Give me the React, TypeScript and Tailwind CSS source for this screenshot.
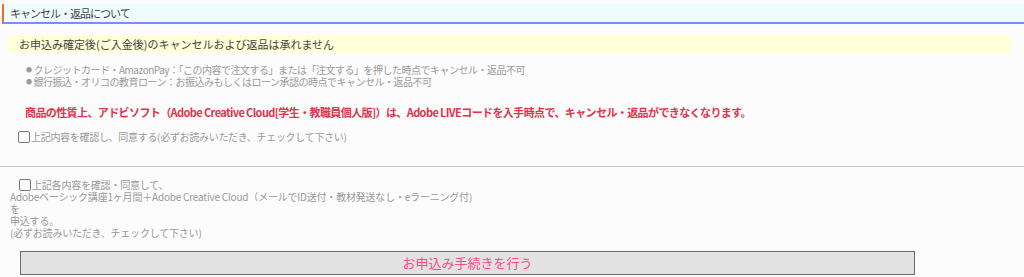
import React from "react";

const jp = { fontFamily: '"Noto Sans CJK JP", "Noto Sans", sans-serif' };

export default function App() {
  return (
    <div className="w-full h-[277px] overflow-hidden bg-[#fcfcfc] pt-[4px]" style={jp}>
      {/* section title */}
      <div className="ml-[2px] h-[20px] bg-[#effdff] border-l-[2px] border-l-[#f06a2a] border-b-[2px] border-b-[#7a8cff] pl-[6px] flex items-center text-[11px] tracking-[-1px] leading-none text-[#444]">
        キャンセル・返品について
      </div>

      <div className="mt-[11px] ml-[8px] mr-[13px] h-[18px] bg-[#ffffd8] pl-[11px] flex items-center text-[11px] leading-none text-[#444]">
        お申込み確定後(ご入金後)のキャンセルおよび返品は承れません
      </div>

      <ul className="mt-[11px] ml-[26px] text-[10px] leading-[12px] tracking-[-0.5px] text-[#9a9a9a]">
        <li className="flex items-center gap-[2px]">
          <span className="text-[6px]">●</span>
          クレジットカード・AmazonPay：「この内容で注文する」または「注文する」を押した時点でキャンセル・返品不可
        </li>
        <li className="flex items-center gap-[2px]">
          <span className="text-[6px]">●</span>
          銀行振込・オリコの教育ローン：お振込みもしくはローン承認の時点でキャンセル・返品不可
        </li>
      </ul>

      <p className="mt-[17px] ml-[25px] text-[11px] leading-[14px] tracking-[-0.6px] font-bold text-[#e0344c]">
        商品の性質上、アドビソフト（Adobe Creative Cloud[学生・教職員個人版]）は、Adobe LIVEコードを入手時点で、キャンセル・返品ができなくなります。
      </p>

      <label className="mt-[11px] ml-[18px] flex items-center text-[10px] leading-[14px] tracking-[-0.3px] text-[#999]">
        <span className="w-[12px] h-[12px] border border-[#777] rounded-[2px] bg-white mr-[1px]" />
        上記内容を確認し、同意する(必ずお読みいただき、チェックして下さい)
      </label>

      <hr className="mt-[22px] border-0 border-t border-t-[#c8c8c8]" />

      <div className="mt-[12px] pl-[10px] text-[10px] leading-[12px] tracking-[-0.2px] text-[#999]">
        <div className="flex items-center ml-[9px]">
          <span className="w-[12px] h-[12px] border border-[#777] rounded-[2px] bg-white mr-[1px]" />
          上記各内容を確認・同意して、
        </div>
        <div>Adobeベーシック講座1ヶ月間＋Adobe Creative Cloud（メールでID送付・教材発送なし・eラーニング付)</div>
        <div>を</div>
        <div>申込する。</div>
        <div>(必ずお読みいただき、チェックして下さい)</div>
      </div>

      <button className="mt-[12px] ml-[20px] w-[895px] h-[24px] bg-[#e2e2e2] border border-[#6a6a6a] text-[13px] text-[#ff4a8a] flex items-center justify-center">
        お申込み手続きを行う
      </button>
    </div>
  );
}
